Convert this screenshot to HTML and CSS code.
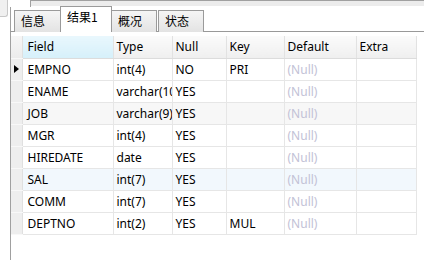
FILE: index.html
```html
<!DOCTYPE html>
<html>
<head>
<meta charset="utf-8">
<link rel="stylesheet" href="styles.css">
</head>
<body>
<div class="window">
  <div class="gutter"><div class="stub"></div></div>
  <div class="main">
    <div class="topbar"></div>
    <div class="tabs">
      <div class="tab t1">信息</div>
      <div class="tab t2 active">结果1</div>
      <div class="tab t3">概况</div>
      <div class="tab t4">状态</div>
    </div>
    <div class="panel">
      <table class="grid">
        <colgroup>
          <col class="c-ind"><col class="c-field"><col class="c-type"><col class="c-null"><col class="c-key"><col class="c-def"><col class="c-extra">
        </colgroup>
        <thead>
          <tr><th class="ind"></th><th class="sorted fcol">Field</th><th>Type</th><th>Null</th><th>Key</th><th>Default</th><th>Extra</th></tr>
        </thead>
        <tbody>
          <tr><td class="ind"><span class="arrow"></span></td><td class="fcol">EMPNO</td><td>int(4)</td><td>NO</td><td>PRI</td><td class="null">(Null)</td><td></td></tr>
          <tr><td class="ind"></td><td class="fcol">ENAME</td><td>varchar(10)</td><td>YES</td><td></td><td class="null">(Null)</td><td></td></tr>
          <tr class="gray"><td class="ind"></td><td class="fcol">JOB</td><td>varchar(9)</td><td>YES</td><td></td><td class="null">(Null)</td><td></td></tr>
          <tr><td class="ind"></td><td class="fcol">MGR</td><td>int(4)</td><td>YES</td><td></td><td class="null">(Null)</td><td></td></tr>
          <tr><td class="ind"></td><td class="fcol">HIREDATE</td><td>date</td><td>YES</td><td></td><td class="null">(Null)</td><td></td></tr>
          <tr class="blue"><td class="ind"></td><td class="fcol">SAL</td><td>int(7)</td><td>YES</td><td></td><td class="null">(Null)</td><td></td></tr>
          <tr><td class="ind"></td><td class="fcol">COMM</td><td>int(7)</td><td>YES</td><td></td><td class="null">(Null)</td><td></td></tr>
          <tr><td class="ind"></td><td class="fcol">DEPTNO</td><td>int(2)</td><td>YES</td><td>MUL</td><td class="null">(Null)</td><td></td></tr>
        </tbody>
      </table>
    </div>
  </div>
</div>
</body>
</html>
```
FILE: styles.css
```css
html, body {
  margin: 0;
  padding: 0;
  background: #ffffff;
}
body {
  width: 424px;
  height: 260px;
  overflow: hidden;
  font-family: "Noto Sans", "Noto Sans CJK SC", sans-serif;
  font-size: 12px;
  color: #000000;
}
.window {
  display: flex;
  height: 260px;
}
.gutter {
  width: 10px;
  flex: none;
}
.stub {
  width: 8px;
  height: 17px;
  box-sizing: border-box;
  background: #f0f0f0;
  border-right: 1px solid #c8c8c8;
  border-bottom: 1px solid #c8c8c8;
  border-bottom-right-radius: 3px;
}
.main {
  flex: 1;
  display: flex;
  flex-direction: column;
  min-width: 0;
}
.topbar {
  height: 7px;
  margin-left: 20px;
  box-sizing: border-box;
  border-top: 1px solid #a0a0a0;
  border-left: 1px solid #a0a0a0;
  background: linear-gradient(#ececec, #ececec 5px, #ffffff 5px);
}
.tabs {
  height: 25px;
  box-sizing: border-box;
  display: flex;
  align-items: flex-end;
  padding-left: 3px;
  border-bottom: 1px solid #999999;
  border-left: 1px solid #a0a0a0;
}
.tab {
  box-sizing: border-box;
  height: 22px;
  margin-bottom: -1px;
  border: 1px solid #9a9a9a;
  border-bottom: none;
  background: linear-gradient(#f5f5f5, #e3e3e3);
  padding-left: 6px;
  line-height: 20px;
  font-family: "Noto Sans CJK SC", sans-serif;
  font-size: 12px;
  color: #000000;
}
.t1 { width: 47px; }
.t2 { width: 52px; margin-left: -1px; }
.t3 { width: 46px; margin-left: -1px; }
.t4 { width: 46px; margin-left: 1px; }
.tab.active {
  height: 26px;
  background: #ffffff;
  line-height: 20px;
  padding-left: 6px;
  position: relative;
  z-index: 1;
}
.panel {
  flex: 1;
  border-left: 1px solid #a0a0a0;
  padding-top: 4px;
  background: #ffffff;
}
.grid {
  border-collapse: collapse;
  table-layout: fixed;
  width: 405px;
}
.c-ind { width: 11px; }
.c-field { width: 91px; }
.c-type { width: 59px; }
.c-null { width: 54px; }
.c-key { width: 58px; }
.c-def { width: 72px; }
.c-extra { width: 60px; }
.grid th, .grid td {
  height: 22px;
  box-sizing: border-box;
  padding: 0 0 0 3px;
  border-right: 1px solid #e6e6e6;
  border-bottom: 1px solid #e6e6e6;
  white-space: nowrap;
  overflow: hidden;
  text-align: left;
  font-weight: normal;
  line-height: 21px;
}
.grid th {
  background: linear-gradient(#fbfbfb, #efefef);
  border-right: 1px solid #e2e2e2;
  border-bottom: 1px solid #dcdcdc;
}
.grid th.sorted {
  background: linear-gradient(#e9f7fd, #d6f0fa);
}
.grid .fcol { padding-left: 5px; }
.grid .ind {
  padding: 0;
  background: #eeeeee;
  border-right: 1px solid #e0e0e0;
  border-bottom: 1px solid #f8f8f8;
  position: relative;
}
.grid th.ind {
  background: linear-gradient(#f6f6f6, #ececec);
}
.arrow {
  position: absolute;
  left: 3px;
  top: 6px;
  width: 0;
  height: 0;
  border-top: 4.5px solid transparent;
  border-bottom: 4.5px solid transparent;
  border-left: 5px solid #000000;
}
.grid tr.gray td { background: #f7f7f7; }
.grid tr.blue td { background: #f2f8fd; }
.grid tr td.ind { background: #eeeeee; }
.grid td.null { color: #c2c2d6; }
```
